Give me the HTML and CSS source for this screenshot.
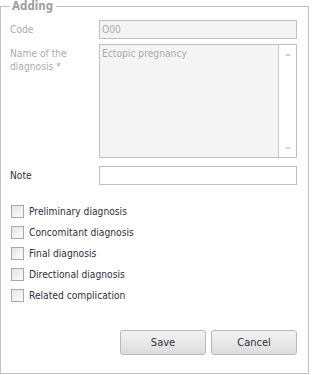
FILE: index.html
```html
<!DOCTYPE html>
<html>
<head>
<meta charset="utf-8">
<link rel="stylesheet" href="styles.css">
</head>
<body>
<fieldset class="panel">
  <legend class="panel-title">Adding</legend>
  <div class="row row-code">
    <div class="label label-disabled">Code</div>
    <input class="field field-disabled" type="text" value="O00" disabled>
  </div>
  <div class="row row-name">
    <div class="label label-disabled">Name of the diagnosis *</div>
    <div class="memo">
      <div class="memo-text">Ectopic pregnancy</div>
      <div class="memo-scroll">
        <span class="arrow arrow-up"></span>
        <span class="arrow arrow-down"></span>
      </div>
    </div>
  </div>
  <div class="row row-note">
    <div class="label">Note</div>
    <input class="field" type="text" value="">
  </div>
  <div class="checks">
    <label class="check"><input type="checkbox" class="box"><span>Preliminary diagnosis</span></label>
    <label class="check"><input type="checkbox" class="box"><span>Concomitant diagnosis</span></label>
    <label class="check"><input type="checkbox" class="box"><span>Final diagnosis</span></label>
    <label class="check"><input type="checkbox" class="box"><span>Directional diagnosis</span></label>
    <label class="check"><input type="checkbox" class="box"><span>Related complication</span></label>
  </div>
  <div class="buttons">
    <button class="btn" type="button">Save</button>
    <button class="btn" type="button">Cancel</button>
  </div>
</fieldset>
</body>
</html>
```
FILE: styles.css
```css
html, body {
  margin: 0;
  padding: 0;
  background: #ffffff;
}
body {
  font-family: "DejaVu Sans Condensed", "DejaVu Sans", sans-serif;
  font-size: 10.2px;
  color: #30303c;
}
.panel {
  box-sizing: border-box;
  width: 309px;
  height: 374px;
  margin: 0;
  padding: 0 11px 0 9px;
  border: 1px solid #c2c2c2;
  display: flex;
  flex-direction: column;
}
.panel-title {
  padding: 0 3px 0 2px;
  margin: 0;
  font-weight: bold;
  font-size: 11.5px;
  line-height: 13px;
  color: #a0a0a0;
}
.row {
  display: flex;
  align-items: flex-start;
}
.row-code { margin-top: 7px; }
.row-name { margin-top: 5px; }
.row-note { margin-top: 8px; }
.label {
  width: 89px;
  flex: none;
  padding-top: 3px;
  line-height: 13px;
}
.label-disabled { color: #aaaaaa; }
.field {
  box-sizing: border-box;
  width: 198px;
  height: 19px;
  margin: 0;
  padding: 0 2px;
  border: 1px solid #c0c0c0;
  border-radius: 0;
  background: #ffffff;
  font: inherit;
  color: #30303c;
  outline: none;
}
.field-disabled {
  background: #f4f4f4;
  color: #aaaaaa;
  -webkit-text-fill-color: #aaaaaa;
  opacity: 1;
}
.memo {
  box-sizing: border-box;
  width: 198px;
  height: 114px;
  border: 1px solid #c0c0c0;
  display: flex;
}
.memo-text {
  flex: 1;
  background: #f4f4f4;
  color: #aaaaaa;
  padding: 2px 2px;
  line-height: 13px;
}
.memo-scroll {
  width: 17px;
  flex: none;
  border-left: 1px solid #c8c8c8;
  background: #ffffff;
  display: flex;
  flex-direction: column;
  justify-content: space-between;
  align-items: center;
  padding: 8px 0 7px;
}
.arrow {
  width: 0;
  height: 0;
  border-left: 3px solid transparent;
  border-right: 3px solid transparent;
}
.arrow-up { border-bottom: 3px solid #cfcfcf; }
.arrow-down { border-top: 3px solid #cfcfcf; }
.checks {
  margin-top: 16px;
  display: flex;
  flex-direction: column;
}
.check {
  height: 21px;
  display: flex;
  align-items: center;
  gap: 5px;
  padding-left: 1px;
}
.box {
  -webkit-appearance: none;
  appearance: none;
  box-sizing: border-box;
  width: 13px;
  height: 13px;
  margin: 0;
  border: 1px solid #a8a8a8;
  background: linear-gradient(135deg, #e6e6e6, #fbfbfb);
  flex: none;
}
.buttons {
  margin-top: 24px;
  display: flex;
  justify-content: flex-end;
  gap: 5px;
  padding-right: 0;
}
.btn {
  box-sizing: border-box;
  width: 86px;
  height: 25px;
  margin: 0;
  border: 1px solid #b9b9b9;
  border-radius: 3px;
  background: linear-gradient(#f2f2f2, #dddddd);
  font: inherit;
  font-size: 11px;
  color: #30303c;
}
```
